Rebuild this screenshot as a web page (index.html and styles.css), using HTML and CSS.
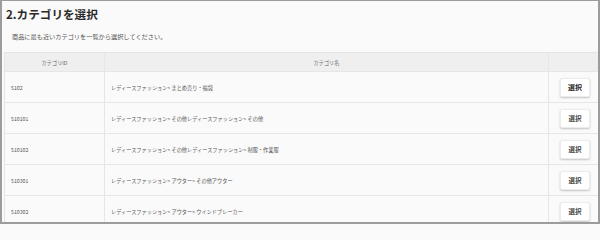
FILE: index.html
```html
<!DOCTYPE html>
<html lang="ja">
<head>
<meta charset="utf-8">
<link rel="stylesheet" href="styles.css">
</head>
<body>
<div class="frame">
  <h1 class="title">2.カテゴリを選択</h1>
  <p class="lead">商品に最も近いカテゴリを一覧から選択してください。</p>
  <div class="table">
    <div class="row head">
      <div class="cell c-id">カテゴリID</div>
      <div class="cell c-name">カテゴリ名</div>
      <div class="cell c-act"></div>
    </div>
    <div class="row">
      <div class="cell c-id">5102</div>
      <div class="cell c-name">レディースファッション&gt; まとめ売り・福袋</div>
      <div class="cell c-act"><button class="btn btn-strong">選択</button></div>
    </div>
    <div class="row">
      <div class="cell c-id">510101</div>
      <div class="cell c-name">レディースファッション&gt; その他レディースファッション&gt; その他</div>
      <div class="cell c-act"><button class="btn">選択</button></div>
    </div>
    <div class="row">
      <div class="cell c-id">510102</div>
      <div class="cell c-name">レディースファッション&gt; その他レディースファッション&gt; 制服・作業服</div>
      <div class="cell c-act"><button class="btn">選択</button></div>
    </div>
    <div class="row">
      <div class="cell c-id">510301</div>
      <div class="cell c-name">レディースファッション&gt; アウター&gt; その他アウター</div>
      <div class="cell c-act"><button class="btn">選択</button></div>
    </div>
    <div class="row">
      <div class="cell c-id">510302</div>
      <div class="cell c-name">レディースファッション&gt; アウター&gt; ウインドブレーカー</div>
      <div class="cell c-act"><button class="btn">選択</button></div>
    </div>
  </div>
</div>
</body>
</html>
```
FILE: styles.css
```css
html, body {
  margin: 0;
  padding: 0;
}
body {
  font-family: "Noto Sans CJK JP", "Noto Sans", sans-serif;
  background: #fafafa;
}
.frame {
  box-sizing: border-box;
  width: 600px;
  height: 224px;
  overflow: hidden;
  background: #fafafa;
  border-style: solid;
  border-color: #9c9c9c;
  border-width: 1px 2px 2px 2px;
  padding: 0 0 0 2px;
}
.title {
  margin: 4px 0 0 2px;
  font-size: 11.6px;
  line-height: 18px;
  font-weight: bold;
  color: #2a2a2a;
}
.lead {
  margin: 10px 0 0 8px;
  font-size: 6.2px;
  line-height: 8px;
  color: #555;
}
.table {
  margin: 11px 0 0 0;
  border-left: 1px solid #e4e4e4;
  border-top: 1px solid #e4e4e4;
}
.row {
  display: grid;
  grid-template-columns: 100px 444px 1fr;
  height: 31px;
  border-bottom: 1px solid #e6e6e6;
  box-sizing: border-box;
}
.row.head {
  height: 19px;
  background: #efefef;
}
.cell {
  display: flex;
  align-items: center;
  padding: 0 6px;
  font-size: 5.2px;
  color: #555;
  border-right: 1px solid #e6e6e6;
  white-space: nowrap;
}
.head .cell {
  justify-content: center;
  color: #666;
}
.c-act {
  border-right: none;
  justify-content: center;
  padding: 0 0 0 3px;
}
.btn {
  width: 30px;
  height: 19px;
  padding: 0;
  background: #fff;
  border: 1px solid #ececec;
  border-radius: 2px;
  box-shadow: 0 1px 2px rgba(0, 0, 0, 0.22);
  font-family: "Noto Sans CJK JP", sans-serif;
  font-size: 6.5px;
  font-weight: 600;
  color: #444;
}
.btn-strong {
  font-weight: bold;
  color: #222;
  font-size: 7px;
}
```
